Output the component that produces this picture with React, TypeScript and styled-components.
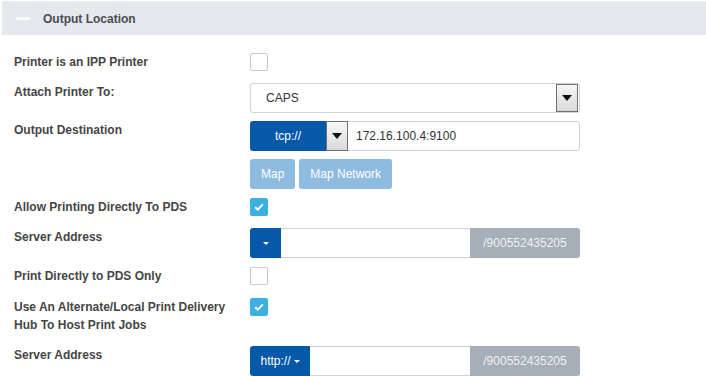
import React from "react";
import styled, { createGlobalStyle } from "styled-components";

const Global = createGlobalStyle`
  html, body {
    margin: 0;
    padding: 0;
    background: #fff;
    font-family: "Liberation Sans", Arial, sans-serif;
  }
`;

const Page = styled.div`
  padding: 1px 0 0 2px;
  width: 704px;
`;

const Header = styled.div`
  display: flex;
  align-items: center;
  height: 34px;
  background: #e5e8ec;
  border-top: 1px solid #eceef1;
  box-sizing: border-box;
`;

const Minus = styled.span`
  width: 14px;
  height: 3px;
  border-radius: 1px;
  background: #fafbfc;
  margin: 0 13px 0 14px;
`;

const Title = styled.span`
  font-size: 12px;
  font-weight: bold;
  color: #4a4d52;
`;

const Body = styled.div`
  padding-left: 12px;
`;

const Row = styled.div<{ $mt: number }>`
  display: flex;
  align-items: flex-start;
  margin-top: ${(p) => p.$mt}px;
`;

const Label = styled.div`
  width: 236px;
  font-size: 12px;
  font-weight: bold;
  line-height: 18px;
  color: #454545;
`;

const Control = styled.div`
  width: 330px;
  display: flex;
`;

const Box = styled.span<{ $checked?: boolean }>`
  width: 18px;
  height: 18px;
  box-sizing: border-box;
  border-radius: 2px;
  border: 1px solid ${(p) => (p.$checked ? "#3db0e1" : "#c9c9c9")};
  background: ${(p) => (p.$checked ? "#3db0e1" : "#fff")};
  display: flex;
  align-items: center;
  justify-content: center;
`;

const Field = styled.div`
  flex: 1;
  height: 30px;
  box-sizing: border-box;
  border: 1px solid #cfd2d6;
  display: flex;
  align-items: center;
  font-size: 12px;
  color: #333;
  background: #fff;
`;

const SelectField = styled(Field)`
  border-radius: 3px;
  padding: 0 1px 0 15px;
  justify-content: space-between;
`;

const InputField = styled(Field)<{ $pad?: number }>`
  border-left: none;
  padding-left: ${(p) => p.$pad ?? 0}px;
  border-radius: 0 3px 3px 0;
`;

const MidField = styled(Field)`
  border-left: none;
  border-right: none;
`;

const NativeArrow = styled.span<{ $h: number }>`
  width: 22px;
  height: ${(p) => p.$h}px;
  box-sizing: border-box;
  border: 1px solid #707070;
  background: linear-gradient(#f6f6f6, #dadada);
  display: flex;
  align-items: center;
  justify-content: center;
  &::after {
    content: "";
    border-left: 5px solid transparent;
    border-right: 5px solid transparent;
    border-top: 6px solid #111;
  }
`;

const BlueButton = styled.span<{ $w: number }>`
  width: ${(p) => p.$w}px;
  height: 30px;
  box-sizing: border-box;
  background: #0559a8;
  color: #fff;
  font-size: 12px;
  display: flex;
  align-items: center;
  justify-content: center;
  gap: 3px;
  border-radius: 3px 0 0 3px;
`;

const Caret = styled.span`
  border-left: 3px solid transparent;
  border-right: 3px solid transparent;
  border-top: 3px solid #fff;
  margin-top: 1px;
`;

const Addon = styled.span`
  width: 110px;
  height: 30px;
  background: #a6aeb8;
  color: #eef0f3;
  font-size: 12px;
  display: flex;
  align-items: center;
  justify-content: center;
  border-radius: 0 3px 3px 0;
`;

const MapButton = styled.span`
  height: 30px;
  padding: 0 11px;
  border-radius: 3px;
  background: #8ebbe0;
  color: #fff;
  font-size: 12px;
  display: flex;
  align-items: center;
  margin-right: 4px;
`;

const Check = ({ checked }: { checked?: boolean }) => (
  <Box $checked={checked}>
    {checked && (
      <svg width="10" height="8" viewBox="0 0 10 8">
        <path d="M1.2 4.2 L3.8 6.6 L8.8 1.4" stroke="#fff" strokeWidth="2" fill="none" />
      </svg>
    )}
  </Box>
);

const ServerField = ({ scheme }: { scheme?: string }) => (
  <Control>
    <BlueButton $w={scheme ? 60 : 31}>
      {scheme}
      <Caret />
    </BlueButton>
    <MidField />
    <Addon>/900552435205</Addon>
  </Control>
);

export default function App() {
  return (
    <Page>
      <Global />
      <Header>
        <Minus />
        <Title>Output Location</Title>
      </Header>
      <Body>
        <Row $mt={18}>
          <Label>Printer is an IPP Printer</Label>
          <Check />
        </Row>
        <Row $mt={12}>
          <Label>Attach Printer To:</Label>
          <Control>
            <SelectField>
              CAPS
              <NativeArrow $h={28} />
            </SelectField>
          </Control>
        </Row>
        <Row $mt={8}>
          <Label>Output Destination</Label>
          <Control>
            <BlueButton $w={76}>tcp://</BlueButton>
            <NativeArrow $h={30} />
            <InputField $pad={8}>172.16.100.4:9100</InputField>
          </Control>
        </Row>
        <Row $mt={8}>
          <Label />
          <Control>
            <MapButton>Map</MapButton>
            <MapButton>Map Network</MapButton>
          </Control>
        </Row>
        <Row $mt={9}>
          <Label>Allow Printing Directly To PDS</Label>
          <Check checked />
        </Row>
        <Row $mt={12}>
          <Label>Server Address</Label>
          <ServerField />
        </Row>
        <Row $mt={9}>
          <Label>Print Directly to PDS Only</Label>
          <Check />
        </Row>
        <Row $mt={13}>
          <Label>
            Use An Alternate/Local Print Delivery
            <br />
            Hub To Host Print Jobs
          </Label>
          <Check checked />
        </Row>
        <Row $mt={12}>
          <Label>Server Address</Label>
          <ServerField scheme="http://" />
        </Row>
      </Body>
    </Page>
  );
}
